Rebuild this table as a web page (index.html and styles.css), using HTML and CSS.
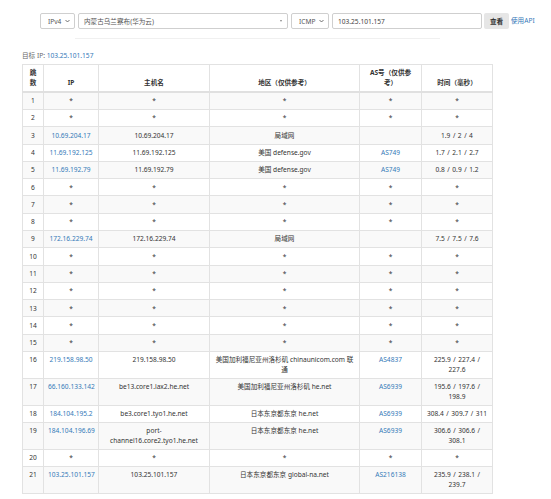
FILE: index.html
```html
<!DOCTYPE html>
<html lang="zh-CN">
<head>
<meta charset="utf-8">
<title>Traceroute</title>
<link rel="stylesheet" href="styles.css">
</head>
<body>
<div class="toolbar">
  <div class="sel sel-ip">IPv4<svg class="chev" viewBox="0 0 6 4"><polyline points="0.6,0.8 3,3.2 5.4,0.8"/></svg></div>
  <div class="sel sel-node">内蒙古乌兰察布(华为云)<span class="tri"></span></div>
  <div class="sel sel-proto">ICMP<svg class="chev" viewBox="0 0 6 4"><polyline points="0.6,0.8 3,3.2 5.4,0.8"/></svg></div>
  <div class="inp">103.25.101.157</div>
  <div class="btn">查看</div>
  <a class="api" href="#">使用API</a>
</div>
<div class="rule"></div>
<div class="target"><span class="tlabel">目标 IP:</span> <a href="#">103.25.101.157</a></div>
<table class="trace">
  <colgroup>
    <col class="c-hop"><col class="c-ip"><col class="c-host"><col class="c-geo"><col class="c-as"><col class="c-time">
  </colgroup>
  <thead>
    <tr><th>跳数</th><th>IP</th><th>主机名</th><th>地区（仅供参考）</th><th>AS号（仅供参考）</th><th>时间（毫秒）</th></tr>
  </thead>
  <tbody>
    <tr><td>1</td><td>*</td><td>*</td><td>*</td><td>*</td><td>*</td></tr>
    <tr><td>2</td><td>*</td><td>*</td><td>*</td><td>*</td><td>*</td></tr>
    <tr><td>3</td><td><a href="#">10.69.204.17</a></td><td>10.69.204.17</td><td>局域网</td><td></td><td>1.9 / 2 / 4</td></tr>
    <tr><td>4</td><td><a href="#">11.69.192.125</a></td><td>11.69.192.125</td><td>美国 defense.gov</td><td><a href="#">AS749</a></td><td>1.7 / 2.1 / 2.7</td></tr>
    <tr><td>5</td><td><a href="#">11.69.192.79</a></td><td>11.69.192.79</td><td>美国 defense.gov</td><td><a href="#">AS749</a></td><td>0.8 / 0.9 / 1.2</td></tr>
    <tr><td>6</td><td>*</td><td>*</td><td>*</td><td>*</td><td>*</td></tr>
    <tr><td>7</td><td>*</td><td>*</td><td>*</td><td>*</td><td>*</td></tr>
    <tr><td>8</td><td>*</td><td>*</td><td>*</td><td>*</td><td>*</td></tr>
    <tr><td>9</td><td><a href="#">172.16.229.74</a></td><td>172.16.229.74</td><td>局域网</td><td></td><td>7.5 / 7.5 / 7.6</td></tr>
    <tr><td>10</td><td>*</td><td>*</td><td>*</td><td>*</td><td>*</td></tr>
    <tr><td>11</td><td>*</td><td>*</td><td>*</td><td>*</td><td>*</td></tr>
    <tr><td>12</td><td>*</td><td>*</td><td>*</td><td>*</td><td>*</td></tr>
    <tr><td>13</td><td>*</td><td>*</td><td>*</td><td>*</td><td>*</td></tr>
    <tr><td>14</td><td>*</td><td>*</td><td>*</td><td>*</td><td>*</td></tr>
    <tr><td>15</td><td>*</td><td>*</td><td>*</td><td>*</td><td>*</td></tr>
    <tr><td>16</td><td><a href="#">219.158.98.50</a></td><td>219.158.98.50</td><td>美国加利福尼亚州洛杉矶 chinaunicom.com 联通</td><td><a href="#">AS4837</a></td><td>225.9 / 227.4 / 227.6</td></tr>
    <tr><td>17</td><td><a href="#">66.160.133.142</a></td><td>be13.core1.lax2.he.net</td><td>美国加利福尼亚州洛杉矶 he.net</td><td><a href="#">AS6939</a></td><td>195.6 / 197.6 / 198.9</td></tr>
    <tr><td>18</td><td><a href="#">184.104.195.2</a></td><td>be3.core1.tyo1.he.net</td><td>日本东京都东京 he.net</td><td><a href="#">AS6939</a></td><td>308.4 / 309.7 / 311</td></tr>
    <tr><td>19</td><td><a href="#">184.104.196.69</a></td><td>port-channel16.core2.tyo1.he.net</td><td>日本东京都东京 he.net</td><td><a href="#">AS6939</a></td><td>306.6 / 306.6 / 308.1</td></tr>
    <tr><td>20</td><td>*</td><td>*</td><td>*</td><td>*</td><td>*</td></tr>
    <tr><td>21</td><td><a href="#">103.25.101.157</a></td><td>103.25.101.157</td><td>日本东京都东京 global-na.net</td><td><a href="#">AS216138</a></td><td>235.9 / 238.1 / 239.7</td></tr>
  </tbody>
</table>
</body>
</html>
```
FILE: styles.css
```css
html, body {
  margin: 0;
  padding: 0;
  background: #fff;
}
body {
  font-family: "Noto Sans", "Noto Sans CJK SC", sans-serif;
  font-size: 6.6px;
  color: #333;
}
a {
  color: #3479b8;
  text-decoration: none;
}
.toolbar {
  display: flex;
  align-items: center;
  margin: 13px 0 0 40px;
  height: 16px;
}
.sel, .inp {
  box-sizing: border-box;
  height: 16px;
  border: 1px solid #cfcfcf;
  border-radius: 2px;
  display: flex;
  align-items: center;
  color: #555;
  background: #fff;
  margin-right: 3px;
}
.sel-ip { width: 35px; padding-left: 7px; }
.sel-node { width: 210px; padding-left: 5px; }
.sel-proto { width: 38px; padding-left: 7px; }
.inp { width: 150px; padding-left: 5px; margin-right: 2px; color: #444; }
.chev {
  width: 5px;
  height: 4px;
  margin-left: auto;
  margin-right: 4px;
  fill: none;
  stroke: #555;
  stroke-width: 1;
}
.tri {
  margin-left: auto;
  margin-right: 5px;
  width: 0;
  height: 0;
  border-left: 1.5px solid transparent;
  border-right: 1.5px solid transparent;
  border-top: 2.5px solid #888;
}
.btn {
  box-sizing: border-box;
  width: 25px;
  height: 16px;
  background: #e6e6e6;
  border-radius: 2px;
  display: flex;
  align-items: center;
  justify-content: center;
  color: #333;
  font-weight: bold;
  margin-right: 2px;
}
.api {
  margin-top: -2px;
}
.rule {
  margin: 9px 0 0 75px;
  width: 365px;
  height: 1px;
  background: #f0f0f0;
}
.target {
  margin: 12px 0 3px 22px;
  line-height: 10px;
  height: 10px;
}
.tlabel { color: #666; }
.trace {
  margin-left: 22px;
  width: 470px;
  table-layout: fixed;
  border-collapse: collapse;
  border: 1px solid #dedede;
}
.c-hop { width: 21px; }
.c-ip { width: 55px; }
.c-host { width: 111px; }
.c-geo { width: 150px; }
.c-as { width: 62px; }
.c-time { width: 71px; }
.trace th, .trace td {
  border: 1px solid #e2e2e2;
  padding: 3.4px 4px;
  line-height: 9.5px;
  text-align: center;
}
.trace th {
  vertical-align: bottom;
  font-weight: bold;
  border-bottom: 2px solid #e0e0e0;
  color: #333;
  padding-left: 5px;
  padding-right: 5px;
}
.trace td {
  vertical-align: top;
}
.trace td:nth-child(3) {
  padding-left: 5px;
  padding-right: 5px;
}
.trace td:nth-child(6) {
  word-spacing: 0.8px;
}
.trace tbody tr:nth-child(odd) {
  background: #f9f9f9;
}
```
